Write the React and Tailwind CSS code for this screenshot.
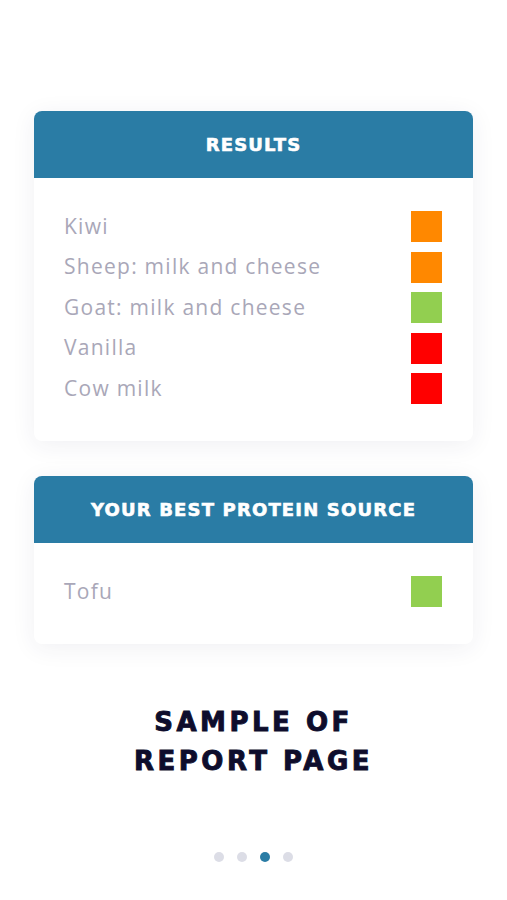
import React from "react";

const results = [
  { name: "Kiwi", color: "bg-[#ff8800]" },
  { name: "Sheep: milk and cheese", color: "bg-[#ff8800]" },
  { name: "Goat: milk and cheese", color: "bg-[#92cf50]" },
  { name: "Vanilla", color: "bg-[#ff0000]" },
  { name: "Cow milk", color: "bg-[#ff0000]" },
];

function Card({ title, items }) {
  return (
    <div className="mx-[34px] rounded-[8px] bg-white shadow-[0_4px_24px_rgba(40,40,90,0.07)] overflow-hidden">
      <div className="h-[67px] bg-[#2a7ca5] flex items-center justify-center">
        <span className="text-white text-[18px] font-bold tracking-[0.065em] [-webkit-text-stroke:0.6px_white] [font-family:'DejaVu_Sans',sans-serif]">
          {title}
        </span>
      </div>
      <div className="pt-[33px] pb-[37px] pl-[30px] pr-[31px] flex flex-col gap-[9.5px]">
        {items.map((it) => (
          <div key={it.name} className="h-[31px] flex items-center justify-between">
            <span className="text-[21px] text-[#a9a7b8] tracking-[0.06em] [font-family:'Open_Sans',sans-serif]">
              {it.name}
            </span>
            <span className={`w-[31px] h-[31px] ${it.color}`} />
          </div>
        ))}
      </div>
    </div>
  );
}

export default function App() {
  return (
    <div className="w-[507px] h-[900px] bg-white pt-[111px] flex flex-col">
      <Card title="RESULTS" items={results} />
      <div className="h-[35px]" />
      <Card title="YOUR BEST PROTEIN SOURCE" items={[{ name: "Tofu", color: "bg-[#92cf50]" }]} />
      <div className="mt-[59px] text-center text-[26px] leading-[39px] font-bold tracking-[0.135em] [-webkit-text-stroke:0.9px_#0e0d2c] text-[#0e0d2c] [font-family:'DejaVu_Sans',sans-serif]">
        SAMPLE OF
        <br />
        REPORT PAGE
      </div>
      <div className="mt-[71px] flex justify-center gap-[13px]">
        <span className="w-[10px] h-[10px] rounded-full bg-[#dcdde6]" />
        <span className="w-[10px] h-[10px] rounded-full bg-[#dcdde6]" />
        <span className="w-[10px] h-[10px] rounded-full bg-[#2a7ca5]" />
        <span className="w-[10px] h-[10px] rounded-full bg-[#dcdde6]" />
      </div>
    </div>
  );
}
